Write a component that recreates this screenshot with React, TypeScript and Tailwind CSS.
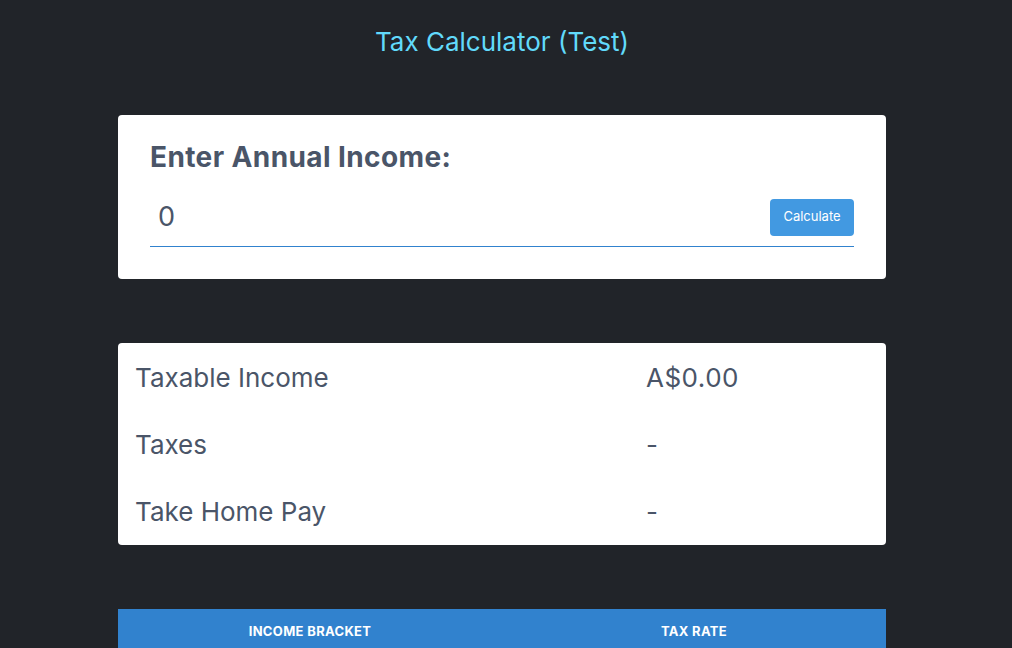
export default function App() {
  return (
    <div className="min-h-screen w-full bg-[#212429] pr-[8px] font-['Inter',sans-serif] text-[#4a5568]">
      <h1 className="pt-[24px] text-center text-[26px] leading-[36px] text-[#61dafb]">Tax Calculator (Test)</h1>

      <div className="mx-auto mt-[55px] w-[768px]">
        {/* Income input */}
        <div className="rounded-[4px] bg-white px-[32px] pt-[24px] pb-[32px]">
          <h2 className="text-[28px] font-bold leading-[36px] tracking-[0.4px]">Enter Annual Income:</h2>
          <div className="mt-[13px] flex h-[59px] items-center border-b border-solid border-b-[#3182ce] pl-[8px]">
            <input
              defaultValue="0"
              className="min-w-0 flex-1 bg-transparent text-[27px] text-[#4a5568] outline-none"
            />
            <button className="h-[37px] w-[84px] rounded-[4px] bg-[#4299e1] text-[13px] text-white">Calculate</button>
          </div>
        </div>

        {/* Results */}
        <div className="mt-[64px] rounded-[4px] bg-white px-[17px] py-[14px]">
          {[
            ["Taxable Income", "A$0.00"],
            ["Taxes", "-"],
            ["Take Home Pay", "-"],
          ].map(([label, value]) => (
            <div key={label} className="flex h-[67px] items-center first:h-[40px] [&:not(:first-child)]:pt-[27px]">
              <span className="w-[511px] text-[26px]">{label}</span>
              <span className="text-[26px] tracking-[0.5px]">{value}</span>
            </div>
          ))}
        </div>

        {/* Bracket table */}
        <div className="mt-[64px] bg-[#3182ce]">
          <div className="flex h-[46px] items-center text-[13px] font-bold uppercase tracking-wide text-white">
            <div className="flex-1 text-center">Income Bracket</div>
            <div className="flex-1 text-center">Tax Rate</div>
          </div>
        </div>
      </div>
    </div>
  );
}
